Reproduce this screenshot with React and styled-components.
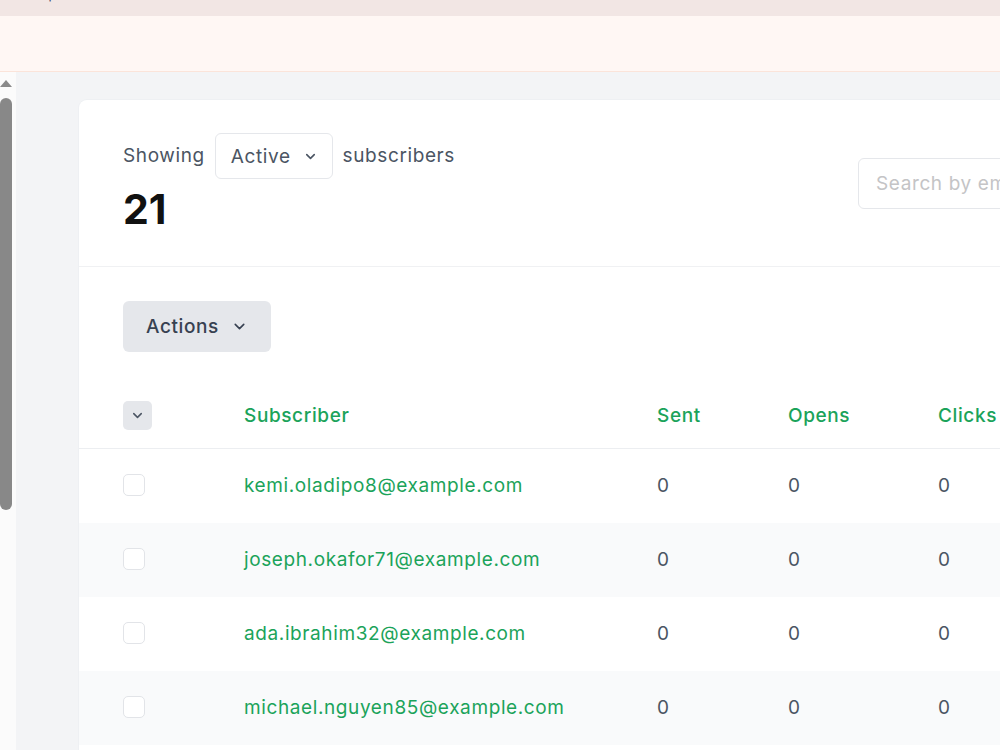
import React from "react";
import styled, { createGlobalStyle } from "styled-components";

const Global = createGlobalStyle`
  html, body { margin: 0; padding: 0; height: 100%; overflow: hidden; }
  body { font-family: Inter, "Noto Sans", sans-serif; background: #f3f4f6; }
  #root { height: 100%; }
  * { box-sizing: border-box; }
`;

const Page = styled.div`
  height: 100vh;
  display: flex;
  flex-direction: column;
  overflow: hidden;
`;

const TopStrip = styled.div`
  height: 16px;
  flex: none;
  background: #f2e6e4;
  overflow: hidden;
  padding-left: 30px;
`;

const TopText = styled.span`
  display: block;
  margin-top: -14px;
  font-size: 13px;
  line-height: 16px;
  color: #3b4a6b;
`;

const Banner = styled.div`
  height: 56px;
  flex: none;
  background: #fff7f4;
  border-bottom: 1px solid #fbe4da;
`;

const Body = styled.div`
  flex: 1;
  display: flex;
  min-height: 0;
`;

const Rail = styled.div`
  width: 16px;
  flex: none;
  background: #fbfbfb;
  display: flex;
  flex-direction: column;
  align-items: flex-start;
  padding-top: 8px;
`;

const RailArrow = styled.div`
  width: 0;
  height: 0;
  border-left: 6.5px solid transparent;
  border-right: 6.5px solid transparent;
  border-bottom: 7px solid #8a8a8a;
`;

const RailThumb = styled.div`
  margin-top: 11px;
  width: 12px;
  height: 412px;
  border-radius: 6px;
  background: #888888;
`;

const Main = styled.main`
  flex: 1;
  padding: 28px 0 0 63px;
  overflow: hidden;
`;

const Card = styled.section`
  width: 1123px;
  background: #ffffff;
  border-radius: 8px 0 0 0;
  box-shadow: 0 0 0 1px #eef0f3;
`;

const CardHeader = styled.div`
  display: flex;
  justify-content: space-between;
  align-items: flex-start;
  padding: 33px 44px 0;
  height: 167px;
  border-bottom: 1px solid #f0f1f3;
`;

const Summary = styled.div`
  display: flex;
  flex-direction: column;
`;

const ShowRow = styled.div`
  display: flex;
  align-items: center;
  gap: 10px;
  font-size: 19px;
  letter-spacing: 0.032em;
  color: #4b5563;
  & > span { margin-top: -1px; }
`;

const SelectBox = styled.div`
  display: flex;
  align-items: center;
  gap: 12px;
  height: 46px;
  padding: 0 14px 0 15px;
  border: 1px solid #e5e7eb;
  border-radius: 6px;
  color: #4b5563;
`;

const Count = styled.div`
  margin-top: 5px;
  font-size: 41px;
  font-weight: 700;
  line-height: 50px;
  color: #111111;
`;

const Search = styled.input`
  margin-top: 25px;
  width: 300px;
  height: 51px;
  border: 1px solid #e5e7eb;
  border-radius: 6px;
  padding: 0 17px;
  font-family: inherit;
  font-size: 19px;
  letter-spacing: 0.032em;
  color: #4b5563;
  outline: none;
  &::placeholder { color: #c4c4c6; }
`;

const Toolbar = styled.div`
  padding: 34px 44px 33px;
`;

const ActionsButton = styled.button`
  display: inline-flex;
  align-items: center;
  gap: 12px;
  height: 51px;
  padding: 0 23px;
  border: none;
  border-radius: 6px;
  background: #e5e7eb;
  color: #374151;
  font-family: inherit;
  font-size: 19px;
  letter-spacing: 0.032em;
  font-weight: 500;
`;

const Row = styled.div`
  display: grid;
  grid-template-columns: 121px 413px 131px 150px 1fr;
  align-items: center;
  height: ${(p) => (p.$head ? "64px" : "74px")};
  padding-left: 44px;
  background: ${(p) => (p.$shaded ? "#f9fafb" : "#ffffff")};
  border-bottom: ${(p) => (p.$head ? "1px solid #eceef1" : "none")};
`;

const HeadCell = styled.div`
  font-size: 19px;
  font-weight: 500;
  letter-spacing: 0.032em;
  line-height: 1;
  margin-top: -2px;
  color: #1ba35a;
`;

const SelectAll = styled.div`
  width: 29px;
  height: 29px;
  margin-top: -3px;
  border-radius: 5px;
  background: #e5e7eb;
  display: flex;
  align-items: center;
  justify-content: center;
  color: #4b5563;
`;

const Checkbox = styled.div`
  width: 22px;
  height: 22px;
  margin-top: -2px;
  border: 1px solid #e2e4e8;
  border-radius: 5px;
  background: #ffffff;
`;

const Email = styled.div`
  font-size: 19px;
  letter-spacing: 0.032em;
  line-height: 1;
  margin-top: -2px;
  color: #1ba35a;
`;

const Num = styled.div`
  font-size: 19px;
  line-height: 1;
  margin-top: -2px;
  color: #4b5563;
`;

const Chevron = ({ size = 14, w = 1.8 }) => (
  <svg width={size} height={size} viewBox="0 0 24 24" fill="none" stroke="currentColor" strokeWidth={w * 24 / size} strokeLinecap="round" strokeLinejoin="round">
    <path d="M6 9l6 6 6-6" />
  </svg>
);

const subscribers = [
  "kemi.oladipo8@example.com",
  "joseph.okafor71@example.com",
  "ada.ibrahim32@example.com",
  "michael.nguyen85@example.com",
  "fatima.bello19@example.com",
];

export default function App() {
  return (
    <Page>
      <Global />
      <TopStrip>
        <TopText>Skip to content</TopText>
      </TopStrip>
      <Banner />
      <Body>
        <Rail>
          <RailArrow />
          <RailThumb />
        </Rail>
        <Main>
          <Card>
            <CardHeader>
              <Summary>
                <ShowRow>
                  <span>Showing</span>
                  <SelectBox>
                    <span>Active</span>
                    <Chevron size={15} w={1.6} />
                  </SelectBox>
                  <span>subscribers</span>
                </ShowRow>
                <Count>21</Count>
              </Summary>
              <Search placeholder="Search by email" />
            </CardHeader>
            <Toolbar>
              <ActionsButton>
                Actions
                <Chevron size={17} w={1.6} />
              </ActionsButton>
            </Toolbar>
            <Row $head>
              <SelectAll>
                <Chevron size={15} w={1.5} />
              </SelectAll>
              <HeadCell>Subscriber</HeadCell>
              <HeadCell>Sent</HeadCell>
              <HeadCell>Opens</HeadCell>
              <HeadCell>Clicks</HeadCell>
            </Row>
            {subscribers.map((s, i) => (
              <Row key={s} $shaded={i % 2 === 1}>
                <Checkbox />
                <Email>{s}</Email>
                <Num>0</Num>
                <Num>0</Num>
                <Num>0</Num>
              </Row>
            ))}
          </Card>
        </Main>
      </Body>
    </Page>
  );
}
